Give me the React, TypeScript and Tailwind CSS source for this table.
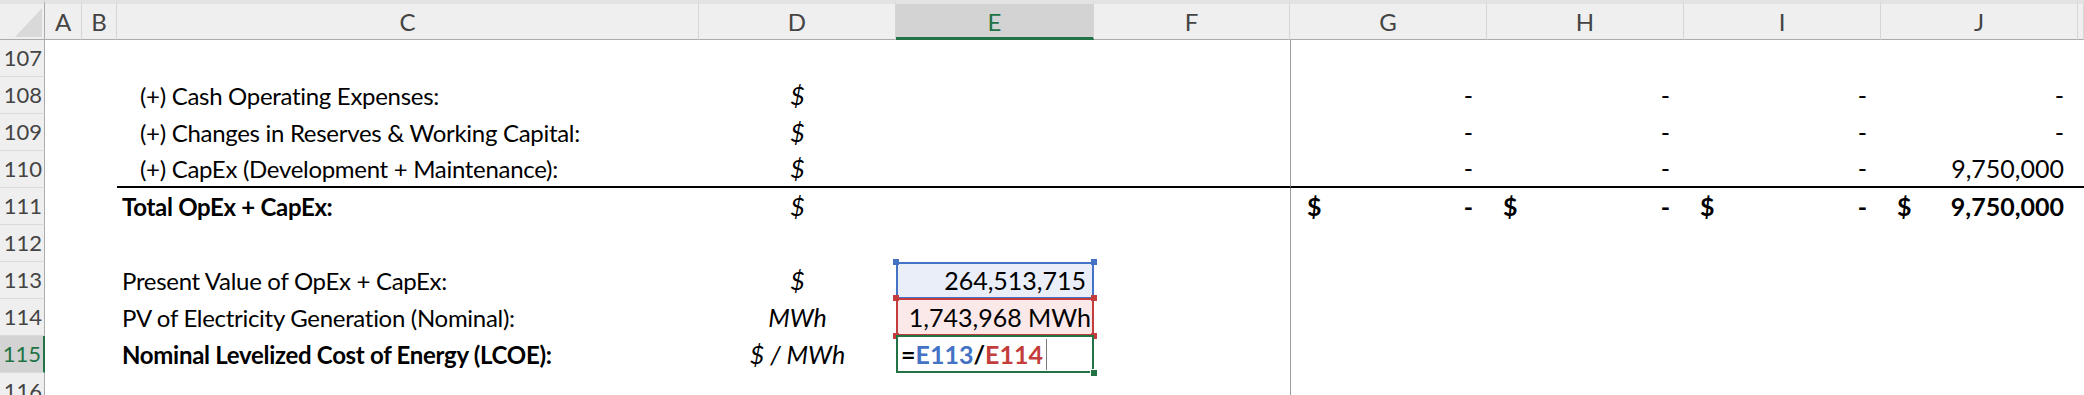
import React from 'react';

// column template: row header | A | B | C | D | E | F | G | H | I | J | K
const GRID = 'grid grid-cols-[45px_37px_35px_582px_197px_198px_196px_197px_197px_197px_197px_1fr]';

type Row = {
    n: number;
    label?: string;
    indent?: boolean;
    bold?: boolean;
    unit?: string;
    vals?: string[];
    total?: boolean;
};

const rows: Row[] = [
    { n: 107 },
    { n: 108, label: '(+) Cash Operating Expenses:', indent: true, unit: '$', vals: ['-', '-', '-', '-'] },
    { n: 109, label: '(+) Changes in Reserves & Working Capital:', indent: true, unit: '$', vals: ['-', '-', '-', '-'] },
    { n: 110, label: '(+) CapEx (Development + Maintenance):', indent: true, unit: '$', vals: ['-', '-', '-', '9,750,000'] },
    { n: 111, label: 'Total OpEx + CapEx:', bold: true, unit: '$', vals: ['-', '-', '-', '9,750,000'], total: true },
    { n: 112 },
    { n: 113, label: 'Present Value of OpEx + CapEx:', unit: '$' },
    { n: 114, label: 'PV of Electricity Generation (Nominal):', unit: 'MWh' },
    { n: 115, label: 'Nominal Levelized Cost of Energy (LCOE):', bold: true, unit: '$ / MWh' },
    { n: 116 },
];

const BLUE = 'bg-[#4472c4]';
const RED = 'bg-[#c43d3d]';

function HeaderRow() {
    const head = 'flex items-center justify-center bg-[#efefef] border-t-4 border-t-[#e3e3e3] border-b border-b-[#ababab] border-r border-r-[#d6d6d6] text-[#444]';
    return (
        <div className={`${GRID} h-[40px] text-[24px]`}>
            <div className="relative bg-[#efefef] border-t-4 border-t-[#e3e3e3] border-b border-b-[#ababab] border-r border-r-[#ababab]">
                <svg className="absolute left-0 top-0" width="45" height="36" viewBox="0 0 45 36">
                    <polygon points="15,33 42,33 42,4" fill="#d9d9d9" />
                </svg>
            </div>
            <div className={head}>A</div>
            <div className={head}>B</div>
            <div className={head}>C</div>
            <div className={head}>D</div>
            <div className="flex items-center justify-center bg-[#d3d3d3] border-t-4 border-t-[#e3e3e3] border-b-[3px] border-b-[#217346] border-r border-r-[#d6d6d6] text-[#217346] pt-[2px]">E</div>
            <div className={`${head} border-r-[#9c9c9c]`}>F</div>
            <div className={head}>G</div>
            <div className={head}>H</div>
            <div className={head}>I</div>
            <div className={head}>J</div>
            <div className={head}></div>
        </div>
    );
}

function ECell({ n, rule }: { n: number; rule: string }) {
    if (n === 113) {
        return (
            <div className="relative flex items-center justify-end pr-[8px] bg-[#e9eef8]">
                264,513,715
                <div className="absolute inset-0 border-2 border-[#4472c4]" />
                <span className={`absolute -left-[3px] -top-[3px] w-[6px] h-[6px] ${BLUE}`} />
                <span className={`absolute -right-[3px] -top-[3px] w-[6px] h-[6px] ${BLUE}`} />
            </div>
        );
    }
    if (n === 114) {
        return (
            <div className="relative flex items-center justify-end pr-[3px] bg-[#fbe8e8]">
                1,743,968 MWh
                <div className="absolute inset-x-0 -top-[1px] bottom-0 border-2 border-[#c43d3d]" />
                <span className={`absolute -left-[3px] -top-[4px] w-[6px] h-[6px] ${RED}`} />
                <span className={`absolute -right-[3px] -top-[4px] w-[6px] h-[6px] ${RED}`} />
                <span className={`absolute -left-[3px] -bottom-[3px] w-[6px] h-[6px] ${RED}`} />
                <span className={`absolute -right-[3px] -bottom-[3px] w-[6px] h-[6px] ${RED}`} />
            </div>
        );
    }
    if (n === 115) {
        return (
            <div className="relative flex items-center pl-[5px] font-bold bg-white">
                <span className="text-black">=</span>
                <span className="text-[#4472c4]">E113</span>
                <span className="text-black">/</span>
                <span className="text-[#c43d3d]">E114</span>
                <span className="ml-[3px] w-px h-[31px] bg-[#7a7a7a]" />
                <div className="absolute inset-x-0 -top-[1px] bottom-0 border-2 border-[#217346]" />
                <span className="absolute -right-[4px] -bottom-[4px] w-[8px] h-[8px] bg-[#217346] border border-white" />
            </div>
        );
    }
    return <div className={rule} />;
}

function SheetRow({ r }: { r: Row }) {
    const sel = r.n === 115;
    const rule = r.n === 110 ? 'border-b-2 border-b-black' : '';
    return (
        <div className={`${GRID} h-[37px]`}>
            <div
                className={`flex items-center justify-end pr-[2px] text-[22px] border-b border-b-[#dadada] ${
                    sel
                        ? 'bg-[#d3d3d3] text-[#217346] border-r-2 border-r-[#217346]'
                        : 'bg-[#efefef] text-[#444] border-r border-r-[#ababab]'
                }`}
            >
                {r.n}
            </div>
            <div />
            <div />
            <div
                className={`flex items-center whitespace-nowrap text-[24px] tracking-[-0.3px] ${r.indent ? 'pl-[23px]' : 'pl-[5px]'} ${
                    r.bold ? 'font-bold' : ''
                } ${rule}`}
            >
                {r.label}
            </div>
            <div className={`flex items-center justify-center italic ${rule}`}>{r.unit}</div>
            <ECell n={r.n} rule={rule} />
            <div className={rule} />
            {[0, 1, 2, 3].map((i) => (
                <div
                    key={i}
                    className={`flex items-center pr-[14px] ${i === 0 ? 'border-l border-l-[#9c9c9c]' : ''} ${
                        r.total ? 'justify-between pl-[16px] font-bold' : 'justify-end'
                    } ${rule}`}
                >
                    {r.total && <span>$</span>}
                    <span>{r.vals ? r.vals[i] : ''}</span>
                </div>
            ))}
            <div className={rule} />
        </div>
    );
}

export default function App() {
    return (
        <div className="w-[2084px] h-[395px] overflow-hidden bg-white text-black text-[25px] font-[Lato,'Noto_Sans',sans-serif] leading-none">
            <HeaderRow />
            {rows.map((r) => (
                <SheetRow key={r.n} r={r} />
            ))}
        </div>
    );
}
